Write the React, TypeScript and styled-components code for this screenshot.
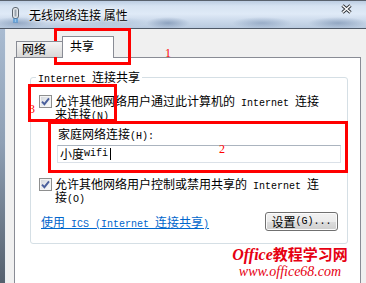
import styled, { createGlobalStyle } from "styled-components";

const GlobalStyle = createGlobalStyle`
	html, body {
		margin: 0;
		padding: 0;
		background: #f0f0f0;
	}
	* {
		box-sizing: border-box;
	}
`;

const Window = styled.div`
	position: relative;
	width: 366px;
	height: 283px;
	overflow: hidden;
	display: flex;
	flex-direction: column;
	background: #f0f0f0;
	font-family: "Noto Sans CJK SC", "Liberation Sans", sans-serif;
	font-size: 12px;
	color: #000;
`;

const TitleBar = styled.div`
	height: 29px;
	flex: none;
	display: flex;
	align-items: center;
	padding-left: 12px;
	border-top: 1px solid #59626d;
	border-bottom: 1px solid #4f5967;
	background:
		radial-gradient(ellipse 28px 6px at 18px 22px, rgba(110, 135, 170, 0.55), transparent),
		radial-gradient(ellipse 40px 5px at 110px 21px, rgba(140, 165, 195, 0.35), transparent),
		radial-gradient(ellipse 22px 6px at 168px 22px, rgba(105, 130, 165, 0.6), transparent),
		radial-gradient(ellipse 30px 6px at 262px 22px, rgba(110, 135, 170, 0.5), transparent),
		radial-gradient(ellipse 30px 6px at 338px 22px, rgba(105, 130, 165, 0.55), transparent),
		linear-gradient(#bccde2 0, #d6e3f2 5px, #dfeaf7 13px, #cddbec 19px, #b9cadf 27px);
`;

const TitleText = styled.span`
	margin-left: 10px;
	line-height: 14px;
	text-shadow: 0 0 5px rgba(255, 255, 255, 0.95), 0 0 2px #fff;
`;

const CloseGlyph = styled.svg`
	align-self: flex-start;
	margin: 3px 14px 0 auto;
`;

const Frame = styled.div`
	flex: 1;
	display: flex;
	min-height: 0;
`;

const SideFrame = styled.div`
	width: 6px;
	flex: none;
	border-right: 1px solid #e9eef3;
	background: linear-gradient(#a9bbd1, #8e9fb4 45%, #55606d);
`;

const Client = styled.div`
	flex: 1;
	display: flex;
	flex-direction: column;
	padding: 7px 5px 0 8px;
	background: #f0f0f0;
`;

const TabStrip = styled.div`
	height: 21px;
	display: flex;
	align-items: flex-end;
	padding-left: 2px;
	position: relative;
	z-index: 1;
`;

const Tab = styled.div<{ $active?: boolean }>`
	height: ${(p) => (p.$active ? 22 : 16)}px;
	width: ${(p) => (p.$active ? 52 : 46)}px;
	margin-bottom: ${(p) => (p.$active ? -1 : 0)}px;
	padding: ${(p) => (p.$active ? "3px 0 0 7px" : "1px 0 0 5px")};
	line-height: 12px;
	border: 1px solid #898c95;
	border-bottom: none;
	border-right: ${(p) => (p.$active ? "1px solid #898c95" : "none")};
	background: ${(p) =>
		p.$active ? "#fff" : "linear-gradient(#f4f4f4, #e6e6e6 50%, #d7d7d7)"};
`;

const TabPanel = styled.div`
	flex: 1;
	background: #fff;
	border: 1px solid #898c95;
	border-bottom: none;
	padding-top: 12px;
`;

const GroupBox = styled.fieldset`
	margin: 0 12px 0 15px;
	padding: 0;
	min-width: 0;
	border: 1px solid #d5dfe5;
	border-radius: 3px;
`;

const Legend = styled.legend`
	margin-left: 5px;
	padding: 0 2px;
	line-height: 14px;
`;

const Latin = styled.span`
	font-family: "Liberation Mono", monospace;
	font-size: 10px;
	line-height: 0;
	white-space: pre;
`;

const GroupBody = styled.div`
	display: flex;
	flex-direction: column;
	padding: 10px 0 12px 0;
`;

const CheckRow = styled.div<{ $top?: number }>`
	display: flex;
	align-items: flex-start;
	padding-left: 8px;
	margin-top: ${(p) => p.$top ?? 0}px;
	line-height: 13px;
`;

const CheckBox = styled.span`
	width: 13px;
	height: 13px;
	flex: none;
	margin: 1px 3px 0 0;
	border: 1px solid #8e8f8f;
	box-shadow: inset 0 0 0 1px #f4f4f4;
	background: linear-gradient(135deg, #cfd3d9, #eef0f2 60%, #fbfbfb);
	display: flex;
	align-items: center;
	justify-content: center;
`;

const FieldLabel = styled.div`
	margin: 7px 0 0 27px;
	line-height: 14px;
`;

const TextInput = styled.div`
	margin: 4px 6px 0 26px;
	height: 18px;
	display: flex;
	align-items: center;
	padding-left: 2px;
	border: 1px solid #dbe1e8;
	border-top-color: #abb4bf;
	line-height: 14px;
`;

const Caret = styled.span`
	width: 1px;
	height: 12px;
	margin-left: 2px;
	background: #000;
`;

const Footer = styled.div`
	margin-top: 9px;
	height: 19px;
	display: flex;
	align-items: center;
	justify-content: space-between;
	padding: 0 9px 0 10px;
`;

const Link = styled.span`
	color: #0066cc;
	text-decoration: underline;
	line-height: 13px;
`;

const Button = styled.div`
	width: 73px;
	height: 19px;
	display: flex;
	align-items: center;
	justify-content: center;
	border: 1px solid #707070;
	border-radius: 3px;
	box-shadow: inset 0 0 0 1px #fbfbfb;
	background: linear-gradient(#f2f2f2, #ebebeb 50%, #dddddd 51%, #cfcfcf);
	line-height: 13px;
`;

const Mark = styled.div<{ $x: number; $y: number; $w: number; $h: number }>`
	position: absolute;
	left: ${(p) => p.$x}px;
	top: ${(p) => p.$y}px;
	width: ${(p) => p.$w}px;
	height: ${(p) => p.$h}px;
	border: 3px solid #ff0000;
	pointer-events: none;
`;

const MarkNo = styled.span<{ $x: number; $y: number }>`
	position: absolute;
	left: ${(p) => p.$x}px;
	top: ${(p) => p.$y}px;
	font-family: "Liberation Serif", serif;
	font-size: 12px;
	line-height: 12px;
	color: #ff0000;
`;

const Watermark = styled.div`
	position: absolute;
	left: 222px;
	top: 245px;
	width: 136px;
	text-align: center;
	color: #e60012;
	text-shadow: 0 0 2px #fff, 0 0 1px #fff;
`;

const WaterTitle = styled.div`
	font-size: 15px;
	font-weight: bold;
	line-height: 18px;
	white-space: nowrap;
`;

const WaterOffice = styled.span`
	font-family: "Liberation Serif", serif;
	font-style: italic;
	font-size: 16px;
	line-height: 0;
`;

const WaterUrl = styled.div`
	font-family: "Liberation Serif", serif;
	font-style: italic;
	font-size: 14px;
	line-height: 14px;
	margin-top: 2px;
`;

const Check = () => (
	<svg width="9" height="9" viewBox="0 0 9 9">
		<path d="M1 4.6 L3.4 7.2 L8 1.4" fill="none" stroke="#4a5f9c" strokeWidth="1.9" />
	</svg>
);

const AdapterIcon = () => (
	<svg width="7" height="16" viewBox="0 0 7 16">
		<rect x="0.5" y="0.5" width="6" height="11" rx="2.5" fill="#e4e8ec" stroke="#5d6670" />
		<rect x="2.5" y="2.5" width="2" height="7" fill="#9aa3ad" />
		<rect x="1" y="11.5" width="5" height="4" fill="#3f86c8" />
		<path d="M2 12v3M3.5 12v3M5 12v3" stroke="#bfe0f7" strokeWidth="0.7" />
	</svg>
);

export default function App() {
	return (
		<Window>
			<GlobalStyle />
			<TitleBar>
				<AdapterIcon />
				<TitleText>无线网络连接 属性</TitleText>
				<CloseGlyph width="11" height="10" viewBox="0 0 11 10">
					<path d="M1.5 1.5 L9.5 8.5 M9.5 1.5 L1.5 8.5" stroke="#2d3238" strokeWidth="3.4" />
					<path d="M1.5 1.5 L9.5 8.5 M9.5 1.5 L1.5 8.5" stroke="#fff" strokeWidth="1.5" />
				</CloseGlyph>
			</TitleBar>
			<Frame>
				<SideFrame />
				<Client>
					<TabStrip>
						<Tab>网络</Tab>
						<Tab $active>共享</Tab>
					</TabStrip>
					<TabPanel>
						<GroupBox>
							<Legend>
								<Latin>Internet </Latin>连接共享
							</Legend>
							<GroupBody>
								<CheckRow>
									<CheckBox>
										<Check />
									</CheckBox>
									<span>
										允许其他网络用户通过此计算机的<Latin> Internet </Latin>连接
										<br />
										来连接<Latin>(N)</Latin>
									</span>
								</CheckRow>
								<FieldLabel>
									家庭网络连接<Latin>(H):</Latin>
								</FieldLabel>
								<TextInput>
									小度<Latin>wifi</Latin>
									<Caret />
								</TextInput>
								<CheckRow $top={14}>
									<CheckBox>
										<Check />
									</CheckBox>
									<span>
										允许其他网络用户控制或禁用共享的<Latin> Internet </Latin>连
										<br />
										接<Latin>(O)</Latin>
									</span>
								</CheckRow>
								<Footer>
									<Link>
										使用<Latin> ICS (Internet </Latin>连接共享<Latin>)</Latin>
									</Link>
									<Button>
										设置<Latin>(G)...</Latin>
									</Button>
								</Footer>
							</GroupBody>
						</GroupBox>
					</TabPanel>
				</Client>
			</Frame>

			<Mark $x={54} $y={28} $w={77} $h={37} />
			<Mark $x={28} $y={84} $w={89} $h={38} />
			<Mark $x={48} $y={121} $w={300} $h={52} />
			<MarkNo $x={165} $y={47}>1</MarkNo>
			<MarkNo $x={219} $y={143}>2</MarkNo>
			<MarkNo $x={29} $y={103}>3</MarkNo>

			<Watermark>
				<WaterTitle>
					<WaterOffice>Office</WaterOffice>教程学习网
				</WaterTitle>
				<WaterUrl>www.office68.com</WaterUrl>
			</Watermark>
		</Window>
	);
}
